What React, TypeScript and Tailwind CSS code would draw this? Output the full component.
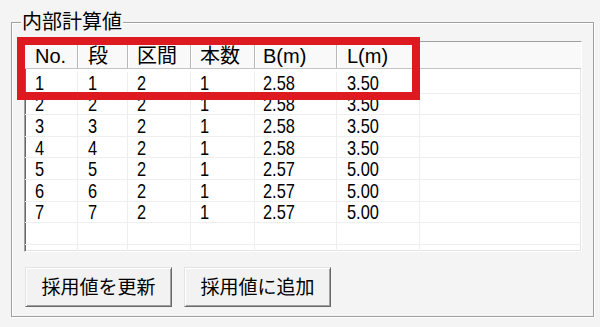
import React from "react";

const cols = [
  { w: "w-[53px]", pl: "pl-[10px]", h: "No." },
  { w: "w-[50px]", pl: "pl-[10px]", h: "段" },
  { w: "w-[63px]", pl: "pl-[9px]", h: "区間" },
  { w: "w-[64px]", pl: "pl-[9px]", h: "本数" },
  { w: "w-[82px]", pl: "pl-[8px]", h: "B(m)" },
  { w: "w-[83px]", pl: "pl-[10px]", h: "L(m)" },
];

const rows: string[][] = [
  ["1", "1", "2", "1", "2.58", "3.50"],
  ["2", "2", "2", "1", "2.58", "3.50"],
  ["3", "3", "2", "1", "2.58", "3.50"],
  ["4", "4", "2", "1", "2.58", "3.50"],
  ["5", "5", "2", "1", "2.57", "5.00"],
  ["6", "6", "2", "1", "2.57", "5.00"],
  ["7", "7", "2", "1", "2.57", "5.00"],
  ["", "", "", "", "", ""],
  ["", "", "", "", "", ""],
];

const cjk = "font-['Liberation_Sans','Noto_Sans_CJK_JP',sans-serif]";

function Button({ label }: { label: string }) {
  return (
    <button
      className={`w-[147px] h-[40px] flex items-center justify-center bg-[#f2f2f2] border border-t-[#e3e3e3] border-l-[#e3e3e3] border-r-[#696969] border-b-[#696969] shadow-[inset_1px_1px_0_#ffffff,inset_-1px_-1px_0_#a0a0a0] text-[19px] leading-none text-black ${cjk}`}
    >
      {label}
    </button>
  );
}

export default function App() {
  return (
    <div className={`relative w-[600px] h-[327px] overflow-hidden bg-[#f4f4f4] ${cjk}`}>
      <div className="pt-[22px] pl-[11px]">
        <div className="w-[583px] h-[295px] border border-[#a0a0a0] shadow-[inset_1px_1px_0_#ffffff,1px_1px_0_#ffffff] pt-[18px] pl-[12px] pr-[11px] flex flex-col">
          {/* list view */}
          <div className="w-[558px] h-[211px] bg-white border border-t-[#a0a0a0] border-l-[#a0a0a0] border-r-[#ffffff] border-b-[#ffffff] shadow-[inset_1px_1px_0_#696969,inset_-1px_-1px_0_#e3e3e3] overflow-hidden flex flex-col">
            <div className="h-[27px] shrink-0 flex border-b border-[#c5c5c5] bg-[#f9f9f9] pt-[1px]">
              {cols.map((c, i) => (
                <div
                  key={i}
                  className={`${c.w} ${c.pl} shrink-0 h-full flex items-center border-r border-[#b8b8b8] shadow-[1px_0_0_#ffffff] text-[20px] leading-none text-black`}
                >
                  {c.h}
                </div>
              ))}
              <div className="flex-1" />
            </div>
            <div className="h-[3px] shrink-0" />
            {rows.map((r, ri) => (
              <div key={ri} className="h-[21.6px] shrink-0 flex border-b border-[#eeeeee]">
                {r.map((v, ci) => (
                  <div
                    key={ci}
                    className={`${cols[ci].w} ${cols[ci].pl} shrink-0 h-full flex items-center border-r border-[#eeeeee] text-[21px] leading-none text-black`}
                  >
                    <span className="inline-block origin-left scale-x-[0.78]">{v}</span>
                  </div>
                ))}
                <div className="flex-1" />
              </div>
            ))}
          </div>
          {/* buttons */}
          <div className="flex gap-[12px] mt-[15px] ml-[1px]">
            <Button label="採用値を更新" />
            <Button label="採用値に追加" />
          </div>
        </div>
      </div>
      {/* group title */}
      <div className="absolute left-[21px] top-[12px] bg-[#f4f4f4] px-[1px] text-[20px] leading-[20px] text-black">
        内部計算値
      </div>
      {/* red highlight */}
      <div className="absolute left-[17px] top-[37px] w-[403px] h-[63px] border-[8px] border-[#dc1a20]" />
    </div>
  );
}
